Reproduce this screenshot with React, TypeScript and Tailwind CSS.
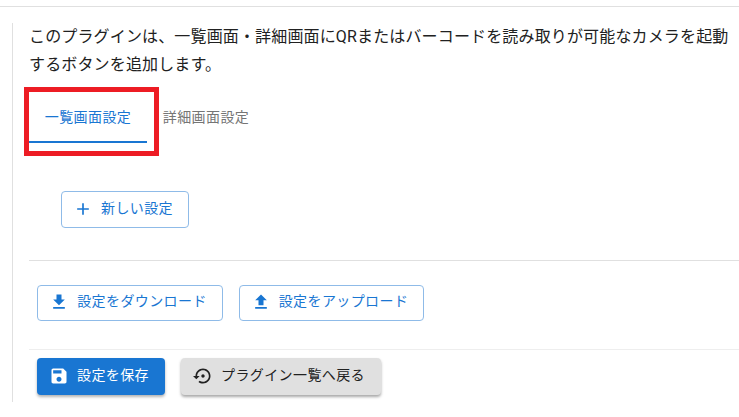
const font = { fontFamily: 'Roboto, "Noto Sans CJK JP", sans-serif' };

const Plus = () => (
  <svg width="20" height="20" viewBox="0 0 24 24" fill="#1976d2"><path d="M19 13h-6v6h-2v-6H5v-2h6V5h2v6h6v2z" /></svg>
);
const Download = () => (
  <svg width="20" height="20" viewBox="0 0 24 24" fill="#1976d2"><path d="M19 9h-4V3H9v6H5l7 7 7-7zM5 18v2h14v-2H5z" /></svg>
);
const Upload = () => (
  <svg width="20" height="20" viewBox="0 0 24 24" fill="#1976d2"><path d="M9 16h6v-6h4l-7-7-7 7h4zm-4 2h14v2H5z" /></svg>
);
const Save = () => (
  <svg width="20" height="20" viewBox="0 0 24 24" fill="#ffffff"><path d="M17 3H5c-1.11 0-2 .9-2 2v14c0 1.1.89 2 2 2h14c1.1 0 2-.9 2-2V7l-4-4zm-5 16c-1.66 0-3-1.34-3-3s1.34-3 3-3 3 1.34 3 3-1.34 3-3 3zm3-10H5V5h10v4z" /></svg>
);
const Restore = () => (
  <svg width="20" height="20" viewBox="0 0 24 24" fill="#212121"><path d="M14 12c0-1.1-.9-2-2-2s-2 .9-2 2 .9 2 2 2 2-.9 2-2zm-2-9c-4.97 0-9 4.03-9 9H0l4 4 4-4H5c0-3.87 3.13-7 7-7s7 3.13 7 7-3.13 7-7 7c-1.51 0-2.91-.49-4.06-1.3l-1.42 1.44C8.04 20.3 9.94 21 12 21c4.97 0 9-4.03 9-9s-4.03-9-9-9z" /></svg>
);

export default function App() {
  return (
    <div className="w-[739px] h-[417px] overflow-hidden bg-white pt-[6px] text-[#212121]" style={font}>
      <div className="h-px bg-[#e0e0e0]" />
      <div className="mt-4 ml-3 h-[379px] border-l border-[#e0e0e0] pl-4">
        <p className="w-[705px] text-base leading-7 tracking-[0.15px] text-[#212121]">
          このプラグインは、一覧画面・詳細画面にQRまたはバーコードを読み取りが可能なカメラを起動するボタンを追加します。
        </p>
        <div className="relative mt-4 flex h-[48px]">
          <div className="flex h-[48px] w-[118px] items-center justify-center border-b-2 border-[#1976d2] pb-[2px] text-sm tracking-[0.4px] text-[#1976d2]">
            一覧画面設定
          </div>
          <div className="flex h-[48px] w-[118px] items-center justify-center pb-[4px] text-sm tracking-[0.4px] text-[#757575]">
            詳細画面設定
          </div>
          <div className="absolute -left-[5px] -top-[8px] h-[69px] w-[135px] border-[5px] border-[#ed1c24]" />
        </div>
        <div className="ml-8 mt-[48px]">
          <button className="flex h-[37px] w-[128px] items-center justify-center gap-2 rounded border border-[#8fbbe8] pr-1 pb-[2px] text-sm tracking-[0.4px] text-[#1976d2]">
            <Plus />
            <span className="mb-[2px]">新しい設定</span>
          </button>
        </div>
        <div className="mt-8 h-px w-[710px] bg-[#e0e0e0]" />
        <div className="ml-2 mt-6 flex gap-4">
          <button className="flex h-[36px] w-[186px] items-center justify-center gap-2 rounded border border-[#8fbbe8] pr-1 pb-[2px] text-sm tracking-[0.4px] text-[#1976d2]">
            <Download />
            <span className="mb-[2px]">設定をダウンロード</span>
          </button>
          <button className="flex h-[36px] w-[185px] items-center justify-center gap-2 rounded border border-[#8fbbe8] pr-1 pb-[2px] text-sm tracking-[0.4px] text-[#1976d2]">
            <Upload />
            <span className="mb-[2px]">設定をアップロード</span>
          </button>
        </div>
        <div className="mt-7 h-px w-[710px] bg-[#eeeeee]" />
        <div className="ml-2 mt-2 flex gap-4">
          <button className="flex h-[37px] w-[128px] items-center justify-center gap-2 rounded bg-[#1976d2] pr-1 pb-[2px] text-sm tracking-[0.4px] text-white shadow-[0_2px_3px_rgba(0,0,0,0.3)]">
            <Save />
            <span className="mb-[2px]">設定を保存</span>
          </button>
          <button className="flex h-[37px] w-[200px] items-center justify-center gap-2 rounded bg-[#e0e0e0] pr-1 pb-[2px] text-sm tracking-[0.4px] text-[#212121] shadow-[0_2px_3px_rgba(0,0,0,0.35)]">
            <Restore />
            <span className="mb-[2px]">プラグイン一覧へ戻る</span>
          </button>
        </div>
      </div>
    </div>
  );
}
